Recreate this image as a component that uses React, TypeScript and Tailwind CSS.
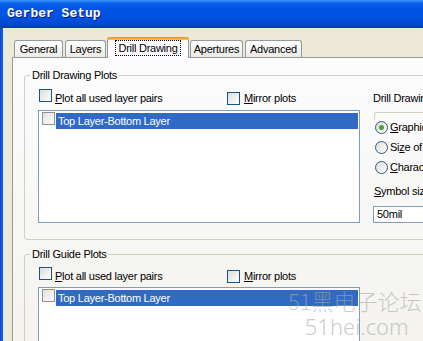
import React from 'react';

// XP-style checkbox box
const Check = ({ inList = false }: { inList?: boolean }) => (
  <span
    className={`inline-block w-[13px] h-[13px] shrink-0 border ${
      inList
        ? 'border-[#8E9296] bg-[linear-gradient(135deg,#E2E2DE,#FBFBFA)]'
        : 'border-[#1C5180] bg-[linear-gradient(135deg,#DCDCD7,#FFFFFF)]'
    }`}
  />
);

const Radio = ({ on = false }: { on?: boolean }) => (
  <span className="w-[13px] h-[13px] shrink-0 rounded-full border border-[#2F5A82] bg-[linear-gradient(135deg,#DCDCD7,#FFFFFF)] flex items-center justify-center">
    {on && <span className="w-[5px] h-[5px] rounded-full bg-[#3EA33E]" />}
  </span>
);

const Tab = ({ label, w, active = false, ml }: { label: string; w: string; active?: boolean; ml: string }) =>
  active ? (
    <div
      className={`${w} ${ml} h-[21px] -mb-px relative z-10 border-x border-[#919B9C] rounded-t-[3px] bg-[#FCFCFE] flex flex-col`}
    >
      <div className="h-[3px] rounded-t-[3px] bg-[linear-gradient(#E68B2C,#FFC83C)] -mx-px" />
      <div className="flex-1 flex items-start justify-center">
        <span className="border border-dotted border-black px-[2px] leading-[14px]">{label}</span>
      </div>
    </div>
  ) : (
    <div
      className={`${w} ${ml} h-[17px] border-x border-t border-[#919B9C] rounded-t-[3px] bg-[linear-gradient(#FFFFFF,#ECEBE6)] flex items-center justify-center`}
    >
      {label}
    </div>
  );

const LayerList = ({ h }: { h: string }) => (
  <div className={`w-[322px] ${h} border border-[#7F9DB9] bg-white`}>
    <div className="flex items-center h-[16px] mt-[2px]">
      <span className="ml-[3px]">
        <Check inList />
      </span>
      <div className="flex-1 ml-[1px] mr-[1px] h-full bg-[#316AC5] text-white pl-[2px] flex items-center">
        Top Layer-Bottom Layer
      </div>
    </div>
  </div>
);

const PlotRow = () => (
  <div className="flex items-center h-[16px]">
    <div className="w-[189px] flex items-center">
      <span className="ml-[1px]">
        <Check />
      </span>
      <span className="ml-[3px]">
        <span className="underline underline-offset-[1px]">P</span>lot all used layer pairs
      </span>
    </div>
    <Check />
    <span className="ml-[4px]">
      <span className="underline underline-offset-[1px]">M</span>irror plots
    </span>
  </div>
);

const App = () => {
  return (
    <div className="w-[423px] h-[341px] overflow-hidden relative font-['Liberation_Sans',Arial,sans-serif] text-[11px] tracking-[-0.25px] text-black">
      {/* title bar */}
      <div className="h-[28px] bg-[linear-gradient(#3D95FF_0%,#0A62EA_12%,#0055E3_30%,#0053DF_60%,#004AD4_85%,#003BB5_100%)] flex items-center pl-[7px]">
        <span className="font-['Liberation_Mono',monospace] font-bold text-[13px] tracking-normal text-white [text-shadow:1px_1px_0_#0A1883]">
          Gerber Setup
        </span>
      </div>

      <div className="flex h-[313px]">
        <div className="w-[3px] bg-[linear-gradient(90deg,#0A4BD8,#1660E6)]" />
        <div className="flex-1 bg-[#ECE9D8] pl-[9px] pt-[9px] flex flex-col min-w-0">
          {/* tabs */}
          <div className="flex items-end h-[20px] ml-[2px]">
            <Tab label="General" w="w-[49px]" ml="ml-0" />
            <Tab label="Layers" w="w-[41px]" ml="ml-[2px]" />
            <Tab label="Drill Drawing" w="w-[82px]" ml="ml-[1px]" active />
            <Tab label="Apertures" w="w-[53px]" ml="ml-[1px]" />
            <Tab label="Advanced" w="w-[57px]" ml="ml-[2px]" />
          </div>

          {/* tab pane */}
          <div className="flex-1 border-l border-t border-[#919B9C] bg-[linear-gradient(#FCFCFE,#F4F3EE)] pl-[11px] pt-[11px] overflow-hidden">
            <fieldset className="w-[480px] h-[171px] border border-[#D0D0BF] rounded-[3px] p-0 m-0">
              <legend className="ml-[5px] px-[2px] leading-[13px]">Drill Drawing Plots</legend>
              <div className="flex pl-[13px] pt-[8px]">
                <div className="w-[322px]">
                  <PlotRow />
                  <div className="mt-[4px]">
                    <LayerList h="h-[113px]" />
                  </div>
                </div>
                <div className="ml-[13px] w-[120px]">
                  <div className="h-[16px] flex items-center">Drill Drawing Symbols</div>
                  <div className="mt-[6px] h-[8px] border-t border-l border-[#D0D0BF] rounded-tl-[3px] ml-[1px]" />
                  <div className="-mt-[3px]">
                    <div className="h-[20px] flex items-center pl-[2px]">
                      <Radio on />
                      <span className="ml-[2px]">
                        <span className="underline underline-offset-[1px]">G</span>raphic symbols
                      </span>
                    </div>
                    <div className="h-[20px] flex items-center pl-[2px]">
                      <Radio />
                      <span className="ml-[2px]">
                        Si<span className="underline underline-offset-[1px]">z</span>e of hole string
                      </span>
                    </div>
                    <div className="h-[20px] flex items-center pl-[2px]">
                      <Radio />
                      <span className="ml-[2px]">
                        <span className="underline underline-offset-[1px]">C</span>haracters
                      </span>
                    </div>
                  </div>
                  <div className="mt-[6px] h-[16px] flex items-center pl-[1px]">
                    <span>
                      <span className="underline underline-offset-[1px]">S</span>ymbol size
                    </span>
                  </div>
                  <div className="mt-[7px] h-[17px] w-[100px] border border-[#7F9DB9] bg-white flex items-center pl-[3px]">
                    50mil
                  </div>
                </div>
              </div>
            </fieldset>

            <fieldset className="w-[480px] h-[200px] mt-[8px] border border-[#D0D0BF] rounded-[3px] p-0 m-0">
              <legend className="ml-[5px] px-[2px] leading-[13px]">Drill Guide Plots</legend>
              <div className="pl-[13px] pt-[7px]">
                <div className="w-[322px]">
                  <PlotRow />
                  <div className="mt-[3px]">
                    <LayerList h="h-[120px]" />
                  </div>
                </div>
              </div>
            </fieldset>
          </div>
        </div>
      </div>

      {/* watermark */}
      <div className="absolute left-[288px] top-[286px] flex flex-col items-center text-[#A8A8A8]/60 tracking-normal pointer-events-none">
        <span className="font-['Noto_Sans_CJK_SC',sans-serif] font-light text-[22px] leading-[28px]">51黑电子论坛</span>
        <span className="font-['Noto_Sans',sans-serif] font-light text-[22px] leading-[24px] ml-[4px]">51hei.com</span>
      </div>
    </div>
  );
};

export default App;
